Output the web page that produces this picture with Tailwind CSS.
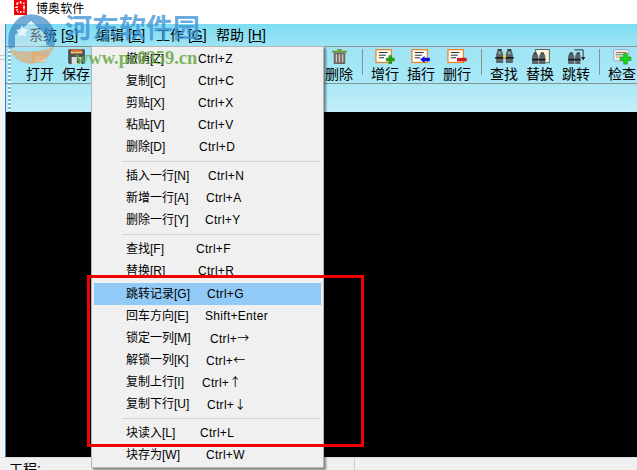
<!DOCTYPE html>
<html lang="zh-CN">
<head>
  <meta charset="UTF-8" />
  <title>博奥软件</title>
  <script src="https://cdn.jsdelivr.net/npm/@tailwindcss/browser@4"></script>
</head>
<body class="w-[637px] h-[470px] overflow-hidden relative bg-white text-black text-[12px] font-['Liberation_Sans','Noto_Sans_CJK_SC',sans-serif]">

  <!-- 标题栏 -->
  <div class="h-[24px] flex items-start pl-[14px] gap-[9px] bg-white">
    <svg width="13" height="15" viewBox="0 0 13 15"><rect width="13" height="15" fill="#f00000"/><path d="M3 3h7v9H3zM6.5 1v3M6.5 11v3M1 7.5h3M9 7.5h3" fill="none" stroke="#fff" stroke-width="1.2" stroke-dasharray="2 1"/></svg>
    <span class="text-[12px] leading-[19px] tracking-[0.1px]">博奥软件</span>
  </div>

  <div class="flex h-[433px]">
    <!-- 左边窗口残留 -->
    <div class="w-[6px] shrink-0 bg-[#f3f3f3] border-r border-[#3d86c6] flex flex-col pt-[31px]">
      <div class="h-px bg-[#c8c8c8]"></div>
      <div class="h-px bg-[#c8c8c8] mt-[3px]"></div>
    </div>

    <div class="flex-1 min-w-0 flex flex-col">
      <!-- 菜单栏 -->
      <div class="h-[22px] flex items-center pl-[23px] text-[14px] bg-gradient-to-b from-[#7ddcf1] to-[#9ce4f4] whitespace-pre">
        <span class="w-[67px]">系统 [<u>S</u>]</span>
        <span class="w-[60px]">编辑 [<u>E</u>]</span>
        <span class="w-[60px]">工作 [<u>G</u>]</span>
        <span>帮助 [<u>H</u>]</span>
      </div>

      <!-- 工具栏 -->
      <div class="h-[66px] relative overflow-hidden bg-gradient-to-b from-[#9fe4f5] via-[#a6e8f6] to-[#c3eefb]">
        <div class="absolute left-[2px] top-[3px] bottom-0 w-[3px] bg-[repeating-linear-gradient(to_bottom,#f4fbff_0,#f4fbff_2px,#6fb7c9_2px,#6fb7c9_4px)]"></div>
        <div class="w-max min-w-full h-[38px] flex border-y border-[#8b8f92] pl-[16px] text-[14px] leading-[18px] text-center">
          <div class="w-[36px] flex flex-col items-center pt-[2px]">
            <svg width="20" height="17" viewBox="0 0 20 17" class="opacity-60"><path d="M1 3h6l2 2h6v10H1z" fill="#e3b56a"/><path d="M5 7h14l-3 8H2z" fill="#f6e0b0" stroke="#b8894a" stroke-width=".6"/></svg>
            <span class="mt-px whitespace-nowrap">打开</span>
          </div>
          <div class="w-[36px] flex flex-col items-center pt-[2px]">
            <svg width="19" height="17" viewBox="0 0 19 17"><rect width="19" height="17" rx="2" fill="#4a5157"/><rect x="3" y="0" width="13" height="5" fill="#c96a3a"/><rect x="3" y="3" width="13" height="2" fill="#e8c27c"/><rect x="4" y="9" width="11" height="8" fill="#d9dde0"/><rect x="10" y="11" width="3" height="5" fill="#333"/></svg>
            <span class="mt-px whitespace-nowrap">保存</span>
          </div>
          <!-- 被菜单盖住的部分 -->
          <div class="w-[227px]"></div>
          <div class="w-[36px] flex flex-col items-center pt-[2px]">
            <svg width="19" height="17" viewBox="0 0 19 17"><rect x="1" y="2" width="17" height="2" fill="#6f9a2a"/><rect x="7" y="0" width="5" height="2" fill="#6f9a2a"/><rect x="3" y="4" width="13" height="13" fill="#6b6660"/><path d="M6 6v9M9.500 6v9M13 6v9" stroke="#cfc9c0" stroke-width="1.6"/></svg>
            <span class="mt-px whitespace-nowrap">删除</span>
          </div>
          <div class="w-px h-[26px] bg-[#8b8f92] mt-[2px] ml-[5px] mr-[4px]"></div>
          <div class="w-[36px] flex flex-col items-center pt-[2px]">
            <svg width="22" height="17" viewBox="0 0 22 17"><rect x=".75" y=".75" width="17.500" height="14.500" fill="#fff" stroke="#e8892c" stroke-width="1.500"/><path d="M4 4h10M4 7h8M4 10h6" stroke="#111" stroke-width="1"/><path d="M12 10h3V7h4v3h3v4h-3v3h-4v-3h-3z" fill="#2f9a18"/></svg>
            <span class="mt-px whitespace-nowrap">增行</span>
          </div>
          <div class="w-[36px] flex flex-col items-center pt-[2px]">
            <svg width="22" height="17" viewBox="0 0 22 17"><rect x=".75" y=".75" width="17.500" height="14.500" fill="#fff" stroke="#e8892c" stroke-width="1.500"/><path d="M4 4h10M4 7h8M4 10h6" stroke="#111" stroke-width="1"/><path d="M10 12l5-4v2h6v4h-6v2z" fill="#1010e0"/></svg>
            <span class="mt-px whitespace-nowrap">插行</span>
          </div>
          <div class="w-[36px] flex flex-col items-center pt-[2px]">
            <svg width="22" height="17" viewBox="0 0 22 17"><rect x=".75" y=".75" width="17.500" height="14.500" fill="#fff" stroke="#e8892c" stroke-width="1.500"/><path d="M4 4h10M4 7h8M4 10h6" stroke="#111" stroke-width="1"/><rect x="11" y="10" width="11" height="4" fill="#d81818"/></svg>
            <span class="mt-px whitespace-nowrap">删行</span>
          </div>
          <div class="w-px h-[26px] bg-[#8b8f92] mt-[2px] ml-[6px] mr-[4px]"></div>
          <div class="w-[36px] flex flex-col items-center pt-[2px]">
            <svg width="21" height="17" viewBox="0 0 21 17"><path d="M3 0h4l2 6v10H1V6zM14 0h4l2 6v10h-8V6z" fill="#59676c"/><path d="M3 0h4v2H3zM14 0h4v2h-4z" fill="#3a3a38"/><path d="M4 3h2v3H4zM15 3h2v3h-2z" fill="#aeb6b4"/><rect y="9" width="21" height="2" fill="#1c1c1c"/><rect x="9" y="7" width="3" height="4" fill="#e6d23c"/></svg>
            <span class="mt-px whitespace-nowrap">查找</span>
          </div>
          <div class="w-[36px] flex flex-col items-center pt-[2px]">
            <svg width="21" height="17" viewBox="0 0 21 17"><rect x="5" y=".5" width="15.500" height="15" fill="#fdf3d8" stroke="#555"/><path d="M3 4h3l2 4v9H1V8zM11 4h3l2 4v9H9V8z" fill="#59676c"/><path d="M3 4h3v2H3zM11 4h3v2h-3z" fill="#3a3a38"/><rect x="1" y="11" width="15" height="2" fill="#1c1c1c"/></svg>
            <span class="mt-px whitespace-nowrap">替换</span>
          </div>
          <div class="w-[36px] flex flex-col items-center pt-[2px]">
            <svg width="21" height="17" viewBox="0 0 21 17"><path d="M8 1h10v9" fill="none" stroke="#222"/><path d="M15.500 9h5L18 13z" fill="#222"/><path d="M3 4h3l2 4v9H1V8zM11 4h3l1 4v9H9V8z" fill="#59676c"/><path d="M3 4h3v2H3zM11 4h3v2h-3z" fill="#3a3a38"/><rect x="1" y="11" width="14" height="2" fill="#1c1c1c"/></svg>
            <span class="mt-px whitespace-nowrap">跳转</span>
          </div>
          <div class="w-px h-[26px] bg-[#8b8f92] mt-[2px] ml-[5px] mr-[4px]"></div>
          <div class="w-[36px] flex flex-col items-center pt-[2px]">
            <svg width="20" height="18" viewBox="0 0 20 18"><rect x=".5" y=".5" width="17" height="13" rx="2" fill="#e6edf5" stroke="#8ea7c4"/><path d="M3 4h12" stroke="#c24a2a"/><path d="M3 6.500h10" stroke="#2a8a2a"/><path d="M3 9h6" stroke="#e0a020"/><path d="M8 9h4V5h4v4h4v4h-4v4h-4v-4H8z" fill="#19d819" stroke="#0a7a0a" stroke-width=".6"/></svg>
            <span class="whitespace-nowrap">检查</span>
          </div>
        </div>
      </div>

      <!-- 黑色工作区 -->
      <div class="flex-1 bg-black"></div>
    </div>
  </div>

  <!-- 状态栏 -->
  <div class="h-[13px] flex bg-[#f0f0f0] border-t border-[#dcdcdc] overflow-hidden">
    <span class="pl-[9px] w-[327px] pt-[2px] text-[14px] leading-[18px]">工程:</span>
    <div class="w-[28px] border-r border-[#cfcfcf]"></div>
  </div>

  <!-- 下拉菜单 -->
  <div class="absolute left-[91px] top-[46px] w-[233px] h-[422px] bg-[#f0f0f0] border border-[#b5b5b5] shadow-[2px_2px_2px_rgba(0,0,0,0.45)] px-[2px] pt-px">
    <div class="h-[22px] flex items-center pl-[32px]"><span class="w-[72px]">撤消[Z]</span><span class="tracking-[0.3px]">Ctrl+Z</span></div>
    <div class="h-[22px] flex items-center pl-[32px]"><span class="w-[72px]">复制[C]</span><span class="tracking-[0.3px]">Ctrl+C</span></div>
    <div class="h-[22px] flex items-center pl-[32px]"><span class="w-[72px]">剪贴[X]</span><span class="tracking-[0.3px]">Ctrl+X</span></div>
    <div class="h-[22px] flex items-center pl-[32px]"><span class="w-[72px]">粘贴[V]</span><span class="tracking-[0.3px]">Ctrl+V</span></div>
    <div class="h-[22px] flex items-center pl-[32px]"><span class="w-[73px]">删除[D]</span><span class="tracking-[0.3px]">Ctrl+D</span></div>
    <div class="h-[7px] flex items-center pl-[28px]"><div class="w-full h-px bg-[#d4d4d4]"></div></div>
    <div class="h-[22px] flex items-center pl-[32px]"><span class="w-[82px]">插入一行[N]</span><span class="tracking-[0.3px]">Ctrl+N</span></div>
    <div class="h-[22px] flex items-center pl-[32px]"><span class="w-[80px]">新增一行[A]</span><span class="tracking-[0.3px]">Ctrl+A</span></div>
    <div class="h-[22px] flex items-center pl-[32px]"><span class="w-[79px]">删除一行[Y]</span><span class="tracking-[0.3px]">Ctrl+Y</span></div>
    <div class="h-[7px] flex items-center pl-[28px]"><div class="w-full h-px bg-[#d4d4d4]"></div></div>
    <div class="h-[22px] flex items-center pl-[32px]"><span class="w-[70px]">查找[F]</span><span class="tracking-[0.3px]">Ctrl+F</span></div>
    <div class="h-[22px] flex items-center pl-[32px]"><span class="w-[72px]">替换[R]</span><span class="tracking-[0.3px]">Ctrl+R</span></div>
    <div class="h-[22px] mt-px flex items-center pl-[32px] bg-[#91c9f7]"><span class="w-[81px]">跳转记录[G]</span><span class="tracking-[0.3px]">Ctrl+G</span></div>
    <div class="h-[22px] flex items-center pl-[32px]"><span class="w-[79px]">回车方向[E]</span><span class="tracking-[0.3px]">Shift+Enter</span></div>
    <div class="h-[22px] flex items-center pl-[32px]"><span class="w-[84px]">锁定一列[M]</span><span class="tracking-[0.3px]">Ctrl+<span class="font-['Noto_Sans_CJK_SC',sans-serif]">→</span></span></div>
    <div class="h-[22px] flex items-center pl-[32px]"><span class="w-[80px]">解锁一列[K]</span><span class="tracking-[0.3px]">Ctrl+<span class="font-['Noto_Sans_CJK_SC',sans-serif]">←</span></span></div>
    <div class="h-[22px] flex items-center pl-[32px]"><span class="w-[76px]">复制上行[I]</span><span class="tracking-[0.3px]">Ctrl+<span class="font-['Noto_Sans_CJK_SC',sans-serif]">↑</span></span></div>
    <div class="h-[22px] flex items-center pl-[32px]"><span class="w-[81px]">复制下行[U]</span><span class="tracking-[0.3px]">Ctrl+<span class="font-['Noto_Sans_CJK_SC',sans-serif]">↓</span></span></div>
    <div class="h-[7px] flex items-center pl-[28px]"><div class="w-full h-px bg-[#d4d4d4]"></div></div>
    <div class="h-[22px] flex items-center pl-[32px]"><span class="w-[74px]">块读入[L]</span><span class="tracking-[0.3px]">Ctrl+L</span></div>
    <div class="h-[22px] flex items-center pl-[32px]"><span class="w-[80px]">块存为[W]</span><span class="tracking-[0.3px]">Ctrl+W</span></div>
  </div>

  <!-- 红色标注框 -->
  <div class="absolute left-[87px] top-[275px] w-[277px] h-[172px] border-[3px] border-[#f00000]"></div>

  <!-- 水印 -->
  <svg class="absolute left-[7px] top-[13px]" width="50" height="52" viewBox="0 0 50 52">
    <path d="M13 4a24 24 0 0 1 35 18q1 6-1 12l-8-2V22L24 8 8 22v12l-6 2Q-2 16 13 4z" fill="#3a87c4" fill-opacity=".7"/>
    <path d="M24 8l15 14v10q-8 3-16 3T8 34V22z" fill="#cfe4ee" fill-opacity=".45"/>
    <path d="M2 36q22 6 45-2-5 14-22 17Q9 50 2 36z" fill="#e8a060" fill-opacity=".6"/>
    <path d="M15 12l2 4 4 1-3 3 1 4-4-2-4 2 1-4-3-3 4-1z" fill="#fff" fill-opacity=".7"/>
  </svg>
  <div class="absolute left-[65px] top-[11px] text-[27px] leading-[36px] font-bold text-[#3b8fd2]/75 whitespace-nowrap">河东软件园</div>
  <div class="absolute left-[75px] top-[47px] text-[18.500px] leading-[22px] font-bold font-['Liberation_Serif',serif] text-[#63a83f]/85 whitespace-nowrap">www.pc0359.cn</div>
</body>
</html>
